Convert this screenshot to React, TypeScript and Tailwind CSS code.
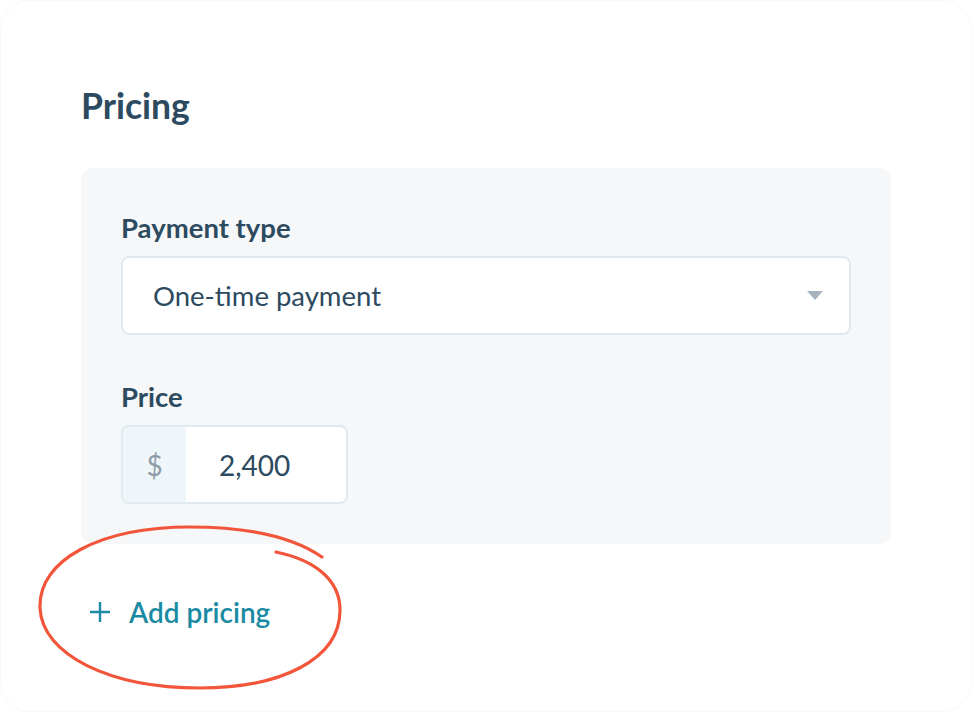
import React from "react";

export default function App() {
  return (
    <div className="w-[972px] h-[712px] bg-white relative overflow-hidden" style={{ fontFamily: "Lato, 'Open Sans', sans-serif" }}>
      <div className="absolute inset-0 rounded-[30px] border border-[#f8f8f9] pointer-events-none" />

      <div className="pl-[81px] pr-[81px] pt-[84px]">
        {/* Header */}
        <h2 className="text-[35.5px] leading-[44px] font-bold text-[#2c4a60]">Pricing</h2>

        {/* Card */}
        <div className="mt-[40px] bg-[#f5f7f9] rounded-[12px] px-[40px] pt-[44px] pb-[40px]">
          <div className="text-[27.5px] leading-[32px] font-bold text-[#2c4a60]">Payment type</div>
          <div className="mt-[12px] h-[79px] bg-white border-2 border-[#e0e9ee] rounded-[8px] flex items-center justify-between pl-[30px] pr-[26px]">
            <span className="text-[27.5px] text-[#2c4a60]">One-time payment</span>
            <svg width="16" height="10" viewBox="0 0 16 10">
              <path d="M0 0 H16 L8 9 Z" fill="#a9b3bd" />
            </svg>
          </div>

          <div className="mt-[46px] text-[27.5px] leading-[32px] font-bold text-[#2c4a60]">Price</div>
          <div className="mt-[12px] w-[227px] h-[79px] bg-white border-2 border-[#e0e9ee] rounded-[8px] flex overflow-hidden">
            <div className="w-[63px] bg-[#eef6f9] flex items-center justify-center text-[28px] text-[#8e9ca8]">$</div>
            <div className="flex-1 flex items-center pl-[33px] text-[28px] text-[#2c4a60]">2,400</div>
          </div>
        </div>

        {/* Add pricing */}
        <div className="mt-[51px] ml-[8px] flex items-center gap-[18px] text-[#1a8ba3]">
          <svg width="22" height="22" viewBox="0 0 22 22">
            <path d="M11 1 V21 M1 11 H21" stroke="#1a8ba3" strokeWidth="2.4" />
          </svg>
          <span className="text-[28px] leading-[34px] font-semibold">Add pricing</span>
        </div>
      </div>

      {/* hand-drawn circle annotation */}
      <svg className="absolute inset-0 pointer-events-none" width="972" height="712" viewBox="0 0 972 712">
        <path
          d="M 322 557 C 290 535, 240 527, 190 527 C 100 527, 38 560, 40 608 C 42 655, 110 688, 200 688 C 280 688, 340 660, 340 610 C 340 580, 315 560, 276 552"
          fill="none"
          stroke="#f2553a"
          strokeWidth="3.2"
          strokeLinecap="round"
        />
      </svg>
    </div>
  );
}
